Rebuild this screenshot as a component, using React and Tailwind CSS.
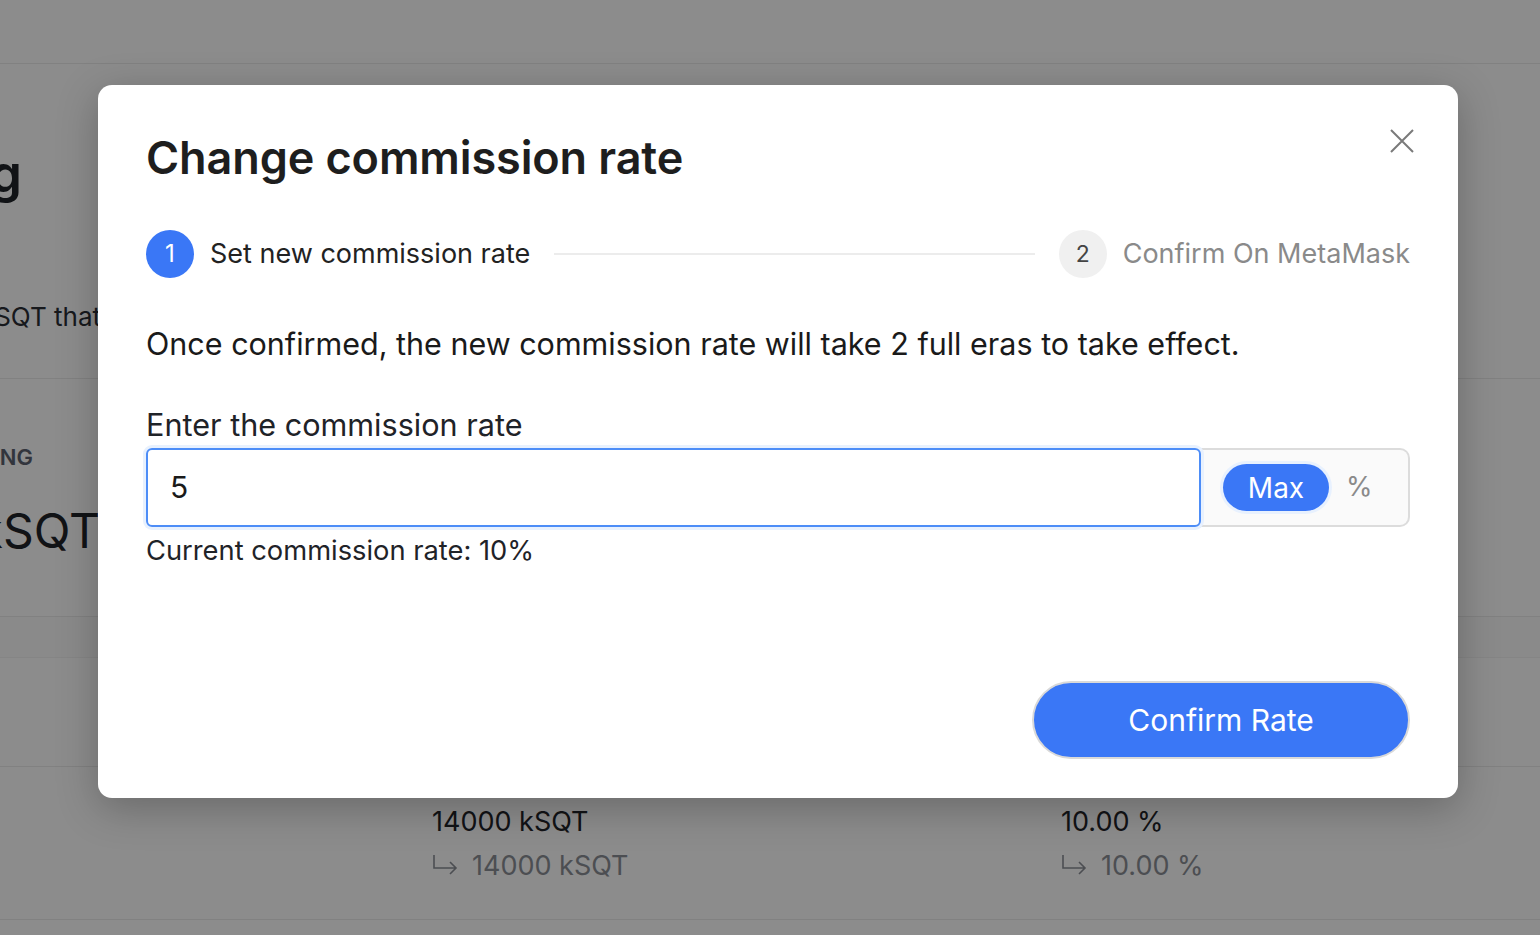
import React from "react";

const F = { fontFamily: "Inter, 'Noto Sans', sans-serif" };

function Page() {
  return (
    <div className="w-[1540px] h-[935px] bg-white overflow-hidden text-[#1f2328]">
      <div className="h-[64px] border-b border-[#ebebeb]" />
      <div className="h-[315px] border-b border-[#ebebeb] flex flex-col">
        <div className="mt-[78px] w-[22px] flex justify-end whitespace-nowrap text-[52px] font-semibold leading-[64px]">Indexing</div>
        <div className="mt-[94px] w-[101px] flex justify-end whitespace-nowrap text-[26px] text-[#2a2e35] leading-[34px]">Your staked kSQT that</div>
      </div>
      <div className="h-[238px] border-b border-[#ebebeb] flex flex-col">
        <div className="mt-[64px] w-[33px] flex justify-end whitespace-nowrap text-[22px] font-semibold text-[#5b6270] leading-[28px]">STAKING</div>
        <div className="mt-[32px] w-[100px] flex justify-end whitespace-nowrap text-[48px] text-[#1f2328] leading-[56px]">1000 kSQT</div>
      </div>
      <div className="h-[41px] border-b border-[#f2f2f2] bg-[#fcfcfc]" />
      <div className="h-[109px] border-b border-[#ebebeb]" />
      <div className="h-[153px] border-b border-[#ebebeb] flex text-[27px] leading-[34px]">
        <div className="w-[432px]" />
        <div className="w-[629px] pt-[38px] flex flex-col gap-[10px]">
          <div>14000 kSQT</div>
          <div className="text-[#8b8f96] flex items-center">
            <svg width="40" height="30" viewBox="0 0 40 30" fill="none" stroke="#8b8f96" strokeWidth="1.6"><path d="M2 4 V17 H24 M18 11 L24 17 L18 23" /></svg>
            14000 kSQT
          </div>
        </div>
        <div className="pt-[38px] flex flex-col gap-[10px]">
          <div>10.00 %</div>
          <div className="text-[#8b8f96] flex items-center">
            <svg width="40" height="30" viewBox="0 0 40 30" fill="none" stroke="#8b8f96" strokeWidth="1.6"><path d="M2 4 V17 H24 M18 11 L24 17 L18 23" /></svg>
            10.00 %
          </div>
        </div>
      </div>
    </div>
  );
}

function Modal() {
  return (
    <div className="w-[1360px] h-[713px] bg-white rounded-[14px] shadow-[0_10px_40px_rgba(0,0,0,0.25)] px-[48px] pt-[40px] relative flex flex-col">
      <button className="absolute right-[41px] top-[41px] w-[30px] h-[30px] flex items-center justify-center">
        <svg width="26" height="26" viewBox="0 0 26 26" fill="none" stroke="#7a7a7a" strokeWidth="2">
          <path d="M2 2 L24 24 M24 2 L2 24" />
        </svg>
      </button>
      <h1 className="text-[45px] font-semibold text-[#1e1e1e] leading-[66px] tracking-[-0.1px]">Change commission rate</h1>
      <div className="mt-[39px] flex items-center h-[48px]">
        <div className="w-[48px] h-[48px] rounded-full bg-[#3a77f6] text-white text-[24px] flex items-center justify-center">1</div>
        <div className="ml-[16px] text-[27px] text-[#222]">Set new commission rate</div>
        <div className="flex-1 h-[2px] bg-[#ececec] mx-[24px]" />
        <div className="w-[48px] h-[48px] rounded-full bg-[#f0f0f0] text-[#444] text-[23px] flex items-center justify-center">2</div>
        <div className="ml-[16px] text-[27px] text-[#8a8a8a]">Confirm On MetaMask</div>
      </div>
      <p className="mt-[46px] text-[30.5px] text-[#1a1a1a] leading-[40px]">Once confirmed, the new commission rate will take 2 full eras to take effect.</p>
      <div className="mt-[41px] text-[30.6px] text-[#1f2328] leading-[40px]">Enter the commission rate</div>
      <div className="mt-[3px] flex h-[79px]">
        <div className="flex-1 rounded-[6px] border-2 border-[#4d8df7] ring-[3px] ring-[#e8f1fe] flex items-center pl-[22px] text-[30px] text-[#1a1a1a] relative z-10">5</div>
        <div className="w-[209px] bg-[#fafafa] border-2 border-l-0 border-[#dcdcdc] rounded-r-[10px] flex items-center pl-[22px]">
          <div className="w-[106px] h-[47px] rounded-full bg-[#3a77f6] ring-[3px] ring-[#e8f1fe] text-white text-[28px] flex items-center justify-center">Max</div>
          <div className="ml-[17px] text-[27px] text-[#8a8a8a]">%</div>
        </div>
      </div>
      <div className="mt-[7px] text-[27.3px] text-[#1f2328] leading-[34px]">Current commission rate: 10%</div>
      <div className="flex-1" />
      <div className="flex justify-end mb-[39px]">
        <button className="w-[378px] h-[78px] rounded-full bg-[#3a77f6] border-2 border-[#d9d9d9] text-white text-[30px]">Confirm Rate</button>
      </div>
    </div>
  );
}

export default function App() {
  return (
    <div style={F} className="relative w-[1540px] h-[935px] overflow-hidden">
      <Page />
      <div className="absolute inset-0 bg-black/45 pt-[85px] pl-[98px]">
        <Modal />
      </div>
    </div>
  );
}
